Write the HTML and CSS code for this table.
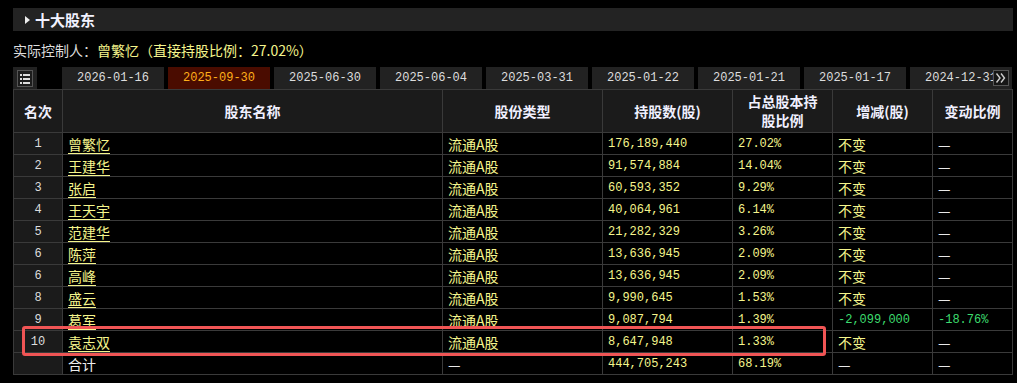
FILE: index.html
```html
<!DOCTYPE html>
<html lang="zh-CN">
<head>
    <meta charset="UTF-8">
    <title>十大股东</title>
    <link rel="stylesheet" href="styles.css">
</head>
<body>
    <div class="panel">
        <div class="section-bar">
            <span class="arrow"></span>
            <span class="section-title">十大股东</span>
        </div>
        <div class="controller">实际控制人：<span class="hl">曾繁忆（直接持股比例：27.02%）</span></div>

        <div class="tab-row">
            <div class="list-btn">
                <svg width="16" height="17" viewBox="0 0 16 17">
                    <rect x="0.5" y="0.5" width="15" height="16" fill="#1c1c1c" stroke="#555"/>
                    <rect x="3" y="4" width="2" height="2" fill="#ddd"/>
                    <rect x="3" y="8" width="2" height="2" fill="#ddd"/>
                    <rect x="3" y="12" width="2" height="2" fill="#ddd"/>
                    <rect x="6" y="4" width="7" height="2" fill="#ddd"/>
                    <rect x="6" y="8" width="7" height="2" fill="#ddd"/>
                    <rect x="6" y="12" width="7" height="2" fill="#ddd"/>
                </svg>
            </div>
            <div class="tabs">
                <span class="tab">2026-01-16</span>
                <span class="tab active">2025-09-30</span>
                <span class="tab">2025-06-30</span>
                <span class="tab">2025-06-04</span>
                <span class="tab">2025-03-31</span>
                <span class="tab">2025-01-22</span>
                <span class="tab">2025-01-21</span>
                <span class="tab">2025-01-17</span>
                <span class="tab">2024-12-31</span>
            </div>
            <div class="more-btn">
                <svg width="16" height="16" viewBox="0 0 16 16">
                    <rect x="0.5" y="0.5" width="15" height="15" fill="#161616" stroke="#555"/>
                    <path d="M3.5 3.5 L7 8 L3.5 12.5 M8 3.5 L11.5 8 L8 12.5" fill="none" stroke="#ccc" stroke-width="1.4"/>
                </svg>
            </div>
        </div>

        <div class="table-wrap">
            <table class="holders">
                <colgroup>
                    <col style="width:49px">
                    <col style="width:380px">
                    <col style="width:160px">
                    <col style="width:130px">
                    <col style="width:100px">
                    <col style="width:100px">
                    <col style="width:80px">
                </colgroup>
                <thead>
                    <tr>
                        <th>名次</th>
                        <th>股东名称</th>
                        <th>股份类型</th>
                        <th>持股数(股)</th>
                        <th>占总股本持<br>股比例</th>
                        <th>增减(股)</th>
                        <th>变动比例</th>
                    </tr>
                </thead>
                <tbody>
                    <tr><td class="rank">1</td><td><a class="name">曾繁忆</a></td><td class="hl">流通A股</td><td class="num">176,189,440</td><td class="num">27.02%</td><td class="hl">不变</td><td class="dash">—</td></tr>
                    <tr><td class="rank">2</td><td><a class="name">王建华</a></td><td class="hl">流通A股</td><td class="num">91,574,884</td><td class="num">14.04%</td><td class="hl">不变</td><td class="dash">—</td></tr>
                    <tr><td class="rank">3</td><td><a class="name">张启</a></td><td class="hl">流通A股</td><td class="num">60,593,352</td><td class="num">9.29%</td><td class="hl">不变</td><td class="dash">—</td></tr>
                    <tr><td class="rank">4</td><td><a class="name">王天宇</a></td><td class="hl">流通A股</td><td class="num">40,064,961</td><td class="num">6.14%</td><td class="hl">不变</td><td class="dash">—</td></tr>
                    <tr><td class="rank">5</td><td><a class="name">范建华</a></td><td class="hl">流通A股</td><td class="num">21,282,329</td><td class="num">3.26%</td><td class="hl">不变</td><td class="dash">—</td></tr>
                    <tr><td class="rank">6</td><td><a class="name">陈萍</a></td><td class="hl">流通A股</td><td class="num">13,636,945</td><td class="num">2.09%</td><td class="hl">不变</td><td class="dash">—</td></tr>
                    <tr><td class="rank">6</td><td><a class="name">高峰</a></td><td class="hl">流通A股</td><td class="num">13,636,945</td><td class="num">2.09%</td><td class="hl">不变</td><td class="dash">—</td></tr>
                    <tr><td class="rank">8</td><td><a class="name">盛云</a></td><td class="hl">流通A股</td><td class="num">9,990,645</td><td class="num">1.53%</td><td class="hl">不变</td><td class="dash">—</td></tr>
                    <tr><td class="rank">9</td><td><a class="name">葛军</a></td><td class="hl">流通A股</td><td class="num">9,087,794</td><td class="num">1.39%</td><td class="num down">-2,099,000</td><td class="num down">-18.76%</td></tr>
                    <tr><td class="rank">10</td><td><a class="name">袁志双</a></td><td class="hl">流通A股</td><td class="num">8,647,948</td><td class="num">1.33%</td><td class="hl">不变</td><td class="dash">—</td></tr>
                    <tr><td class="rank"></td><td class="plain">合计</td><td class="dash">—</td><td class="num">444,705,243</td><td class="num">68.19%</td><td class="dash">—</td><td class="dash">—</td></tr>
                </tbody>
            </table>
            <div class="mark"></div>
        </div>
    </div>
</body>
</html>
```

FILE: styles.css
```css
body {
    margin: 0;
    background: #000;
    color: #ddd;
    font-family: "Noto Sans CJK SC", sans-serif;
}
.panel {
    width: 1000px;
    padding: 8px 0 0 13px;
}
.section-bar {
    height: 23px;
    background: #232323;
    display: flex;
    align-items: center;
    padding-left: 12px;
    gap: 5px;
}
.arrow {
    width: 0;
    height: 0;
    border-top: 4px solid transparent;
    border-bottom: 4px solid transparent;
    border-left: 5px solid #eee;
}
.section-title {
    font-size: 15px;
    font-weight: bold;
    color: #f2f2ff;
}
.controller {
    margin-top: 9px;
    height: 20px;
    line-height: 20px;
    font-size: 14px;
    color: #ddd;
}
.hl {
    color: #f5f58c;
}
.tab-row {
    position: relative;
    margin-top: 7px;
    height: 22px;
    display: flex;
    overflow: hidden;
}
.list-btn {
    width: 24px;
    background: #222;
    display: flex;
    align-items: center;
    padding-left: 4px;
    box-sizing: border-box;
    margin-right: 25px;
}
.list-btn svg {
    display: block;
}
.tabs {
    display: flex;
    gap: 4px;
}
.tab {
    flex: 0 0 102px;
    height: 22px;
    line-height: 22px;
    text-align: center;
    background: #222;
    color: #ddd;
    font-family: "Liberation Mono", monospace;
    font-size: 12px;
}
.tab.active {
    background: #4a0c00;
    color: #ffae1a;
}
.more-btn {
    position: absolute;
    right: 4px;
    top: 3px;
    background: #000;
    line-height: 0;
}
.table-wrap {
    position: relative;
}
.holders {
    border-collapse: collapse;
    table-layout: fixed;
    width: 1000px;
    font-size: 14px;
}
.holders th,
.holders td {
    border: 1px solid #3a3a3a;
    padding: 0 5px;
    text-align: left;
    white-space: nowrap;
    overflow: hidden;
}
.holders th {
    height: 42px;
    background: #1b1b1b;
    color: #f0f0ff;
    font-weight: bold;
    font-size: 14px;
    line-height: 19px;
    text-align: center;
}
.holders td {
    height: 21px;
    line-height: 20px;
    background: #000;
}
.holders td.rank {
    background: #1b1b1b;
    text-align: center;
    color: #ddd;
    font-family: "Liberation Mono", monospace;
    font-size: 12px;
}
.name {
    color: #f5f58c;
    text-decoration: underline;
    text-underline-offset: 3px;
}
.plain {
    color: #eee;
}
.num {
    color: #f5f58c;
    font-family: "Liberation Mono", monospace;
    font-size: 12px;
}
.down {
    color: #3ddc6e;
}
.dash {
    color: #e8e8e8;
}
.mark {
    position: absolute;
    left: 9px;
    top: 237px;
    width: 798px;
    height: 24px;
    border: 3px solid #f05555;
    border-radius: 3px;
}
```
